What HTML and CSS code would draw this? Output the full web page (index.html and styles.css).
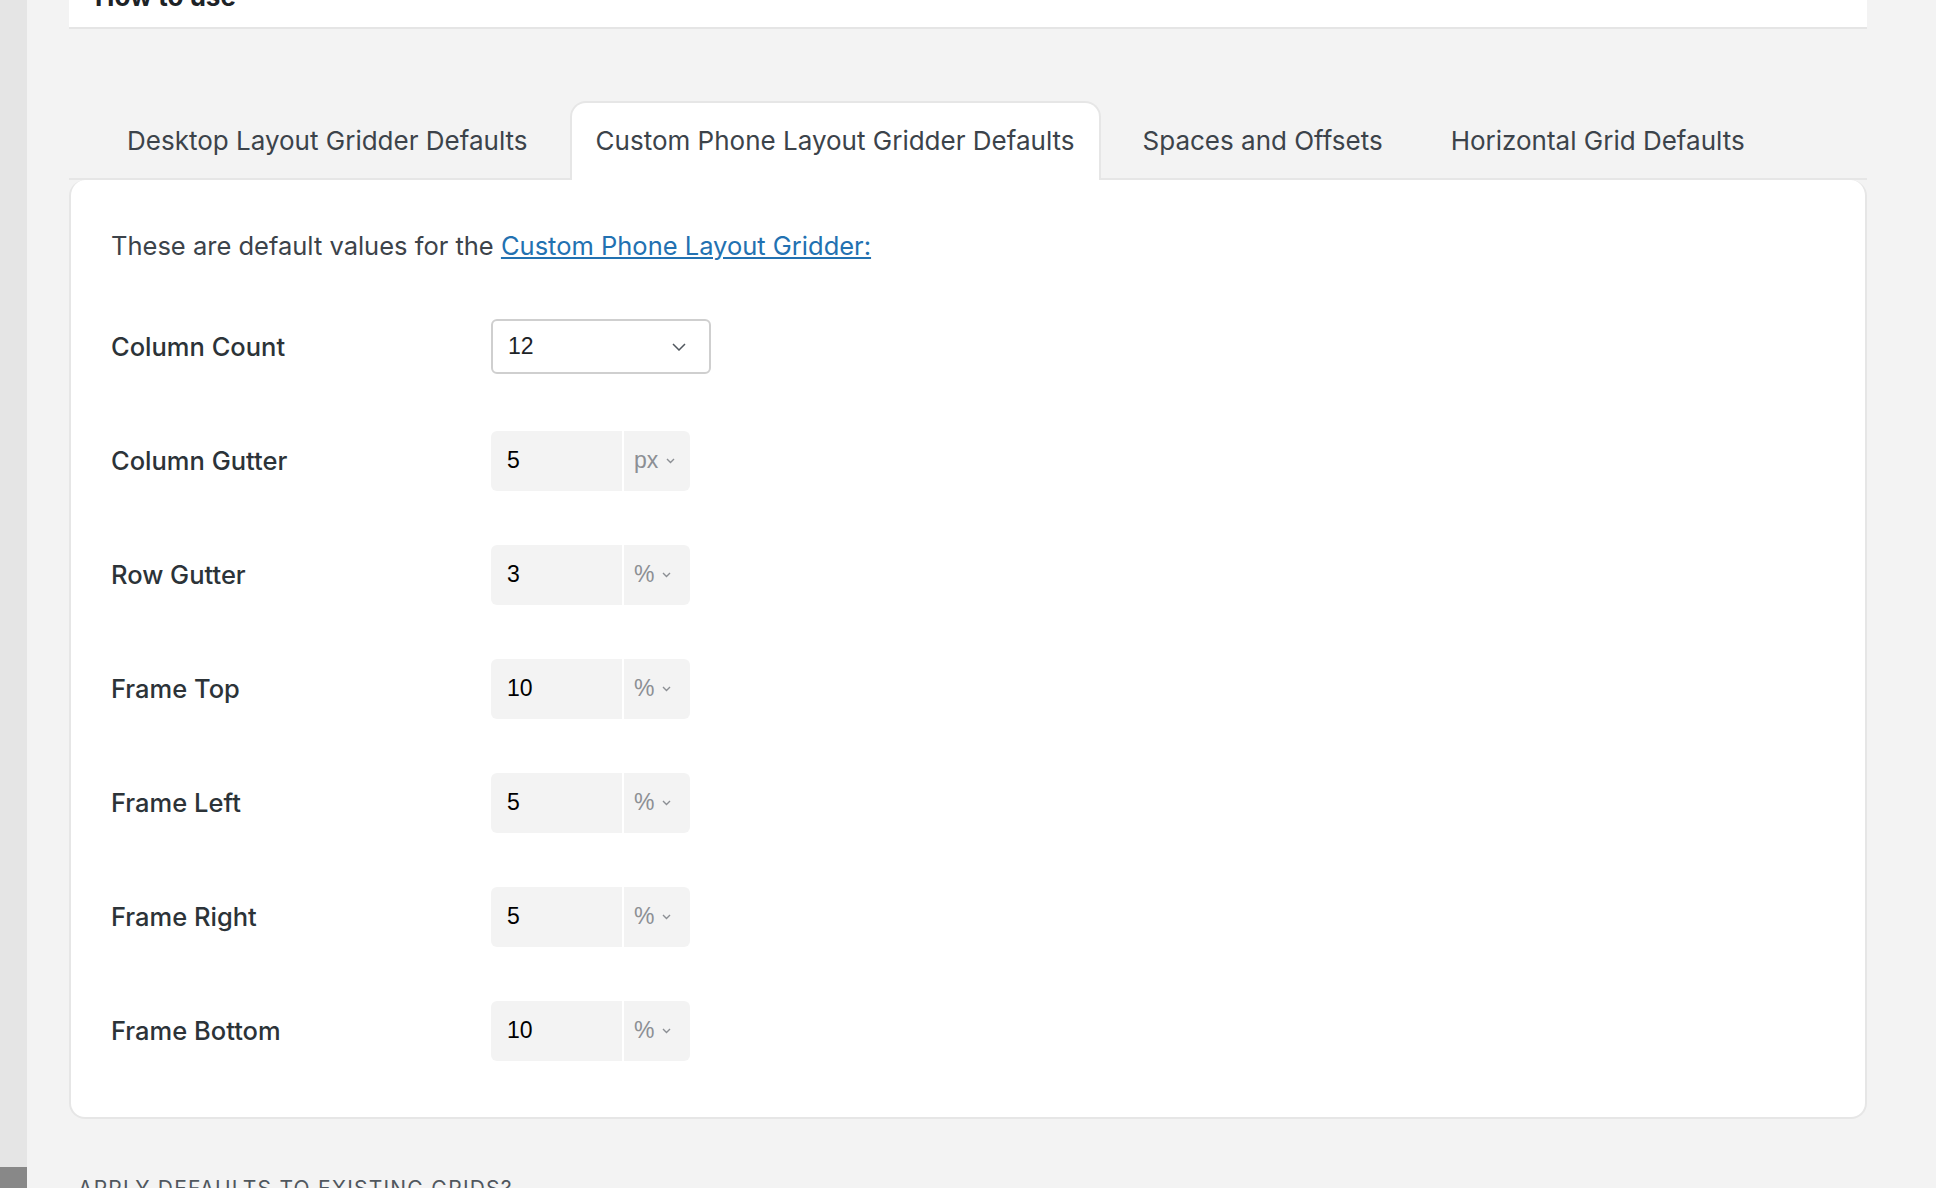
FILE: index.html
```html
<!DOCTYPE html>
<html>
  <head>
    <meta charset="utf-8">
    <link rel="stylesheet" href="styles.css">
  </head>
  <body>
    <aside class="sidebar">
      <div class="sidebar-item"></div>
    </aside>
    <main class="content">
      <section class="card">
        <h2>How to use</h2>
      </section>

      <nav class="tabs">
        <a class="tab" href="#">Desktop Layout Gridder Defaults</a>
        <a class="tab active" href="#">Custom Phone Layout Gridder Defaults</a>
        <a class="tab" href="#">Spaces and Offsets</a>
        <a class="tab" href="#">Horizontal Grid Defaults</a>
      </nav>

      <section class="panel">
        <p class="intro">These are default values for the <a href="#">Custom Phone Layout Gridder:</a></p>

        <div class="row">
          <label>Column Count</label>
          <div class="select">
            <span>12</span>
            <svg width="14" height="8" viewBox="0 0 14 8"><path d="M1 1l6 6 6-6" fill="none" stroke="#50575e" stroke-width="1.5"/></svg>
          </div>
        </div>

        <div class="row">
          <label>Column Gutter</label>
          <div class="unit-input">
            <span class="value">5</span>
            <span class="unit">px <svg width="9" height="6" viewBox="0 0 9 6"><path d="M1 1l3.5 3.5L8 1" fill="none" stroke="#8c8f94" stroke-width="1.4"/></svg></span>
          </div>
        </div>

        <div class="row">
          <label>Row Gutter</label>
          <div class="unit-input">
            <span class="value">3</span>
            <span class="unit">% <svg width="9" height="6" viewBox="0 0 9 6"><path d="M1 1l3.5 3.5L8 1" fill="none" stroke="#8c8f94" stroke-width="1.4"/></svg></span>
          </div>
        </div>

        <div class="row">
          <label>Frame Top</label>
          <div class="unit-input">
            <span class="value">10</span>
            <span class="unit">% <svg width="9" height="6" viewBox="0 0 9 6"><path d="M1 1l3.5 3.5L8 1" fill="none" stroke="#8c8f94" stroke-width="1.4"/></svg></span>
          </div>
        </div>

        <div class="row">
          <label>Frame Left</label>
          <div class="unit-input">
            <span class="value">5</span>
            <span class="unit">% <svg width="9" height="6" viewBox="0 0 9 6"><path d="M1 1l3.5 3.5L8 1" fill="none" stroke="#8c8f94" stroke-width="1.4"/></svg></span>
          </div>
        </div>

        <div class="row">
          <label>Frame Right</label>
          <div class="unit-input">
            <span class="value">5</span>
            <span class="unit">% <svg width="9" height="6" viewBox="0 0 9 6"><path d="M1 1l3.5 3.5L8 1" fill="none" stroke="#8c8f94" stroke-width="1.4"/></svg></span>
          </div>
        </div>

        <div class="row">
          <label>Frame Bottom</label>
          <div class="unit-input">
            <span class="value">10</span>
            <span class="unit">% <svg width="9" height="6" viewBox="0 0 9 6"><path d="M1 1l3.5 3.5L8 1" fill="none" stroke="#8c8f94" stroke-width="1.4"/></svg></span>
          </div>
        </div>
      </section>

      <h3 class="section-title">Apply defaults to existing grids?</h3>
    </main>
  </body>
</html>
```

FILE: styles.css
```css
html,
body {
  height: 100%;
}

body {
  margin: 0;
  display: flex;
  overflow: hidden;
  background-color: #f3f3f3;
  font-family: "Inter", "Roboto", sans-serif;
  color: #3c434a;
}

.sidebar {
  width: 27px;
  flex-shrink: 0;
  display: flex;
  flex-direction: column;
  justify-content: flex-end;
  background-color: #e5e5e5;
}

.sidebar-item {
  height: 21px;
  background-color: #888888;
}

.content {
  flex: 1;
  padding: 0 69px 0 42px;
}

/* top card, scrolled mostly out of view */
.card {
  margin-top: -40px;
  padding: 24px 26px 17px;
  background-color: #fff;
  border-bottom: 2px solid #e5e5e5;
}

.card h2 {
  margin: 0;
  font-size: 26px;
  line-height: 26px;
  color: #1d2327;
}

.tabs {
  display: flex;
  gap: 16px;
  margin-top: 72px;
  padding-left: 32px;
  border-bottom: 2px solid #e6e6e6;
}

.tab {
  padding: 0 24px 3px;
  height: 79px;
  box-sizing: border-box;
  display: flex;
  align-items: center;
  font-size: 26px;
  color: #3c434a;
  text-decoration: none;
  border: 2px solid transparent;
  border-bottom: none;
  border-radius: 16px 16px 0 0;
  margin-bottom: -2px;
}

.tab.active {
  background-color: #fff;
  border-color: #e6e6e6;
}

.panel {
  background-color: #fff;
  border: 2px solid #e6e6e6;
  border-top: none;
  border-radius: 16px;
  padding: 50px 40px 29px;
}

.intro {
  margin: 0 0 27.5px;
  font-size: 25.5px;
  line-height: 32px;
  color: #3c434a;
}

.intro a {
  color: #2271b1;
}

.row {
  display: flex;
  align-items: center;
  height: 114px;
}

.row label {
  width: 380px;
  font-size: 25.5px;
  font-weight: 500;
  color: #2c3338;
}

.select {
  width: 220px;
  height: 55px;
  box-sizing: border-box;
  display: flex;
  align-items: center;
  justify-content: space-between;
  padding: 0 23px 0 15px;
  border: 2px solid #cfcfcf;
  border-radius: 6px;
  font-family: "Liberation Sans", sans-serif;
  font-size: 23px;
  color: #1d2327;
}

.unit-input {
  display: flex;
  gap: 2px;
  height: 60px;
}

.unit-input .value {
  width: 131px;
  box-sizing: border-box;
  display: flex;
  align-items: center;
  padding-left: 16px;
  background-color: #f3f3f3;
  border-radius: 6px 0 0 6px;
  font-family: "Liberation Sans", sans-serif;
  font-size: 23px;
  color: #000;
}

.unit-input .unit {
  width: 66px;
  box-sizing: border-box;
  display: flex;
  align-items: center;
  gap: 8px;
  padding-left: 10px;
  background-color: #f3f3f3;
  border-radius: 0 6px 6px 0;
  font-family: "Liberation Sans", sans-serif;
  font-size: 23px;
  color: #8c8f94;
}

.section-title {
  margin: 57px 0 0 9px;
  font-size: 21px;
  font-weight: 400;
  letter-spacing: 1.2px;
  text-transform: uppercase;
  color: #50575e;
}
```
